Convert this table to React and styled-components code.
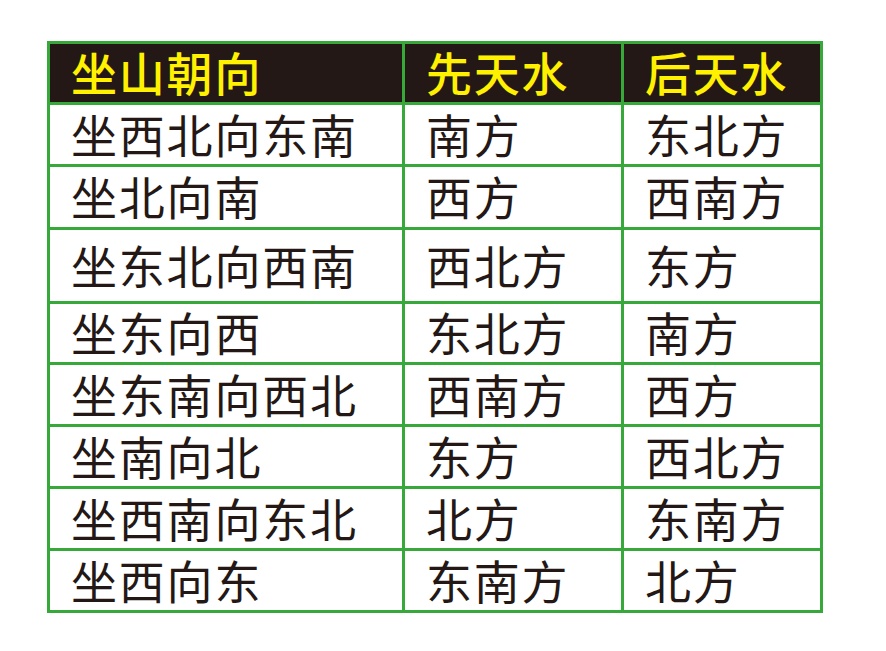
import React from 'react';
import styled, { createGlobalStyle } from 'styled-components';

const GlobalStyle = createGlobalStyle`
  html, body {
    margin: 0;
    padding: 0;
    background: #ffffff;
  }
  body {
    font-family: "Noto Sans CJK SC", "Noto Sans", sans-serif;
  }
`;

const Page = styled.div`
  width: 886px;
  height: 651px;
  padding: 41px 0 0 47px;
  box-sizing: border-box;
`;

const Grid = styled.div`
  display: grid;
  grid-template-columns: 352px 216px 196px;
  grid-template-rows: ${props => props.rows.map(r => `${r}px`).join(' ')};
  gap: 3px;
  padding: 3px;
  width: max-content;
  background: #37a83a;
`;

const Cell = styled.div`
  display: flex;
  align-items: center;
  padding: 0 0 4px 21px;
  background: ${props => (props.head ? '#231815' : '#ffffff')};
  color: ${props => (props.head ? '#fff100' : '#231815')};
  font-size: 46px;
  font-weight: ${props => (props.head ? 500 : 400)};
  letter-spacing: 1.8px;
  line-height: 1;
  white-space: nowrap;
`;

const header = ['坐山朝向', '先天水', '后天水'];

const rows = [
  ['坐西北向东南', '南方', '东北方'],
  ['坐北向南', '西方', '西南方'],
  ['坐东北向西南', '西北方', '东方'],
  ['坐东向西', '东北方', '南方'],
  ['坐东南向西北', '西南方', '西方'],
  ['坐南向北', '东方', '西北方'],
  ['坐西南向东北', '北方', '东南方'],
  ['坐西向东', '东南方', '北方'],
];

const rowHeights = [58, 59, 60, 71, 58, 59, 59, 59, 59];

export default function App() {
  return (
    <>
      <GlobalStyle />
      <Page>
        <Grid rows={rowHeights}>
          {header.map(h => (
            <Cell head key={h}>{h}</Cell>
          ))}
          {rows.map((row, i) =>
            row.map((text, j) => <Cell key={`${i}-${j}`}>{text}</Cell>)
          )}
        </Grid>
      </Page>
    </>
  );
}
